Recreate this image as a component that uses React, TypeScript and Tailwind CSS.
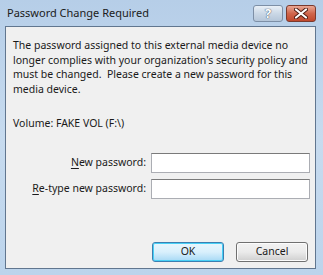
import React from 'react';

// Vista-style "Password Change Required" dialog

const font = { fontFamily: '"Segoe UI", "Noto Sans", "Open Sans", sans-serif' };

function CaptionButtons() {
  return (
    <div className="flex gap-[3px] pt-[5px] pr-[7px]">
      <div className="flex h-[17px] w-[30px] items-center justify-center rounded-[3px] border border-[#7d8fa6] bg-gradient-to-b from-[#e9f0f7] via-[#cbd8e6] to-[#b5c6d9]">
        <span className="text-[13px] font-bold leading-none text-white [text-shadow:0_0_1px_#3f5066,0_0_1px_#3f5066]">?</span>
      </div>
      <div className="flex h-[17px] w-[30px] items-center justify-center rounded-[3px] border border-[#7a3a2e] bg-gradient-to-b from-[#e9a794] via-[#d0664c] to-[#c0482c]">
        <svg width="14" height="11" viewBox="0 0 14 11">
          <path d="M2 1.5 L12 9.5 M12 1.5 L2 9.5" stroke="#4b1a10" strokeWidth="4" strokeLinecap="round" />
          <path d="M2 1.5 L12 9.5 M12 1.5 L2 9.5" stroke="#fff" strokeWidth="2.2" strokeLinecap="round" />
        </svg>
      </div>
    </div>
  );
}

function Field({ accel, rest }: { accel: string; rest: string }) {
  return (
    <div className="flex items-center">
      <span className="w-[138px] whitespace-nowrap pr-[5px] text-right">
        <span className="underline underline-offset-2">{accel}</span>
        {rest}
      </span>
      <div className="h-[20px] w-[159px] border border-[#abadb3] border-t-[#7a7a7a] bg-white" />
    </div>
  );
}

export default function App() {
  return (
    <div
      className="flex h-[275px] w-[323px] flex-col bg-gradient-to-b from-[#b6cee8] via-[#c7dbef] to-[#bcd4ec] text-[10.5px] text-[#1a1a1a]"
      style={font}
    >
      {/* Title bar */}
      <div className="flex h-[26px] shrink-0 items-start justify-between">
        <span className="whitespace-nowrap pl-[7px] pt-[5px] text-[11px] text-[#1b1b1b]">Password Change Required</span>
        <CaptionButtons />
      </div>

      {/* Client area */}
      <div className="mb-[6px] ml-[5px] mr-[7px] flex flex-1 flex-col border border-[#61768f] bg-[#f0f0f0] pl-[7px]">
        <p className="mt-[11px] whitespace-nowrap leading-[14.5px]">
          The password assigned to this external media device no
          <br />
          longer complies with your organization's security policy and
          <br />
          must be changed.&nbsp; Please create a new password for this
          <br />
          media device.
        </p>

        <p className="mt-[20px] leading-[14px]">Volume: FAKE VOL (F:\)</p>

        <div className="mt-[23px] flex flex-col gap-[6px]">
          <Field accel="N" rest="ew password:" />
          <Field accel="R" rest="e-type new password:" />
        </div>

        <div className="mt-auto mb-[6px] flex gap-[12px] pl-[139px]">
          <button className="h-[20px] w-[72px] rounded-[3px] border border-[#3c7fb1] bg-gradient-to-b from-[#eaf6fd] via-[#d9f0fc] to-[#a7d9f5] shadow-[inset_0_0_0_1px_#48d0f6]">
            OK
          </button>
          <button className="h-[20px] w-[72px] rounded-[3px] border border-[#707070] bg-gradient-to-b from-[#f2f2f2] via-[#ebebeb] to-[#cfcfcf] shadow-[inset_0_0_0_1px_#fcfcfc]">
            Cancel
          </button>
        </div>
      </div>
    </div>
  );
}
